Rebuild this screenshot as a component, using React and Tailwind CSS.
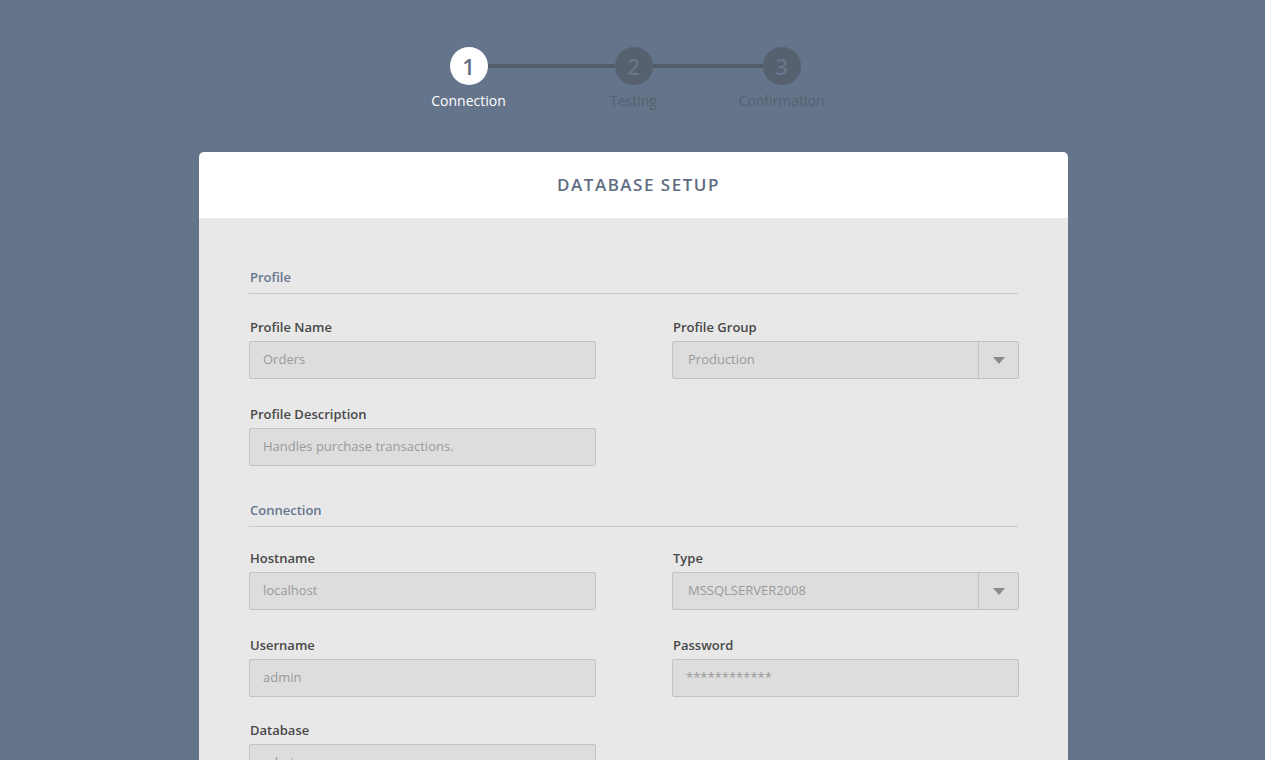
import React from "react";

function Field({ label, value, select, className = "" }) {
  return (
    <div className={"flex flex-col " + className}>
      <label className="text-[13px] font-semibold text-[#484848] leading-[18px] mb-[5px] pl-[1px]">{label}</label>
      <div className="flex h-[38px] items-stretch bg-[#dddddd] border border-[#c2c2c2] rounded-[2px]">
        <div className={"flex-1 flex items-center text-[13px] text-[#9a9a9a] " + (select ? "pl-[15px]" : "pl-[13px]")}>{value}</div>
        {select && (
          <div className="w-[40px] border-l border-[#c2c2c2] flex items-center justify-center">
            <svg width="12" height="7" viewBox="0 0 12 7"><path d="M0 0 H12 L6 7 Z" fill="#8a8a8a" /></svg>
          </div>
        )}
      </div>
    </div>
  );
}

function Section({ title }) {
  return (
    <div className="border-b border-[#c9c9c9] pb-[5px] pl-[1px]">
      <span className="text-[13px] font-semibold text-[#66768f]">{title}</span>
    </div>
  );
}

function Step({ n, label, active }) {
  return (
    <div className="relative">
      <div
        className={
          "w-[38px] h-[38px] rounded-full flex items-center justify-center text-[22px] font-semibold " +
          (active ? "bg-white text-[#5f6d82]" : "bg-[#56606e] text-[#68758a]")
        }
      >
        {n}
      </div>
      <div
        className={
          "absolute top-[43px] left-1/2 -translate-x-1/2 whitespace-nowrap text-[14px] " +
          (active ? "text-white" : "text-[#56606e]")
        }
      >
        {label}
      </div>
    </div>
  );
}

export default function App() {
  return (
    <div className="min-h-[760px] bg-[#64748a] overflow-hidden" style={{ fontFamily: '"Open Sans", "Noto Sans", sans-serif' }}>
      <div className="flex justify-center pt-[47px]">
        <div className="flex items-center ml-[-15px]">
          <Step n="1" label="Connection" active />
          <div className="w-[127px] h-[4px] bg-[#525c6b]" />
          <Step n="2" label="Testing" />
          <div className="w-[110px] h-[4px] bg-[#525c6b]" />
          <Step n="3" label="Confirmation" />
        </div>
      </div>
      <div className="mt-[67px] w-[869px] ml-[199px] rounded-t-[5px] overflow-hidden">
        <div className="bg-white h-[66px] flex items-center justify-center">
          <h1 className="text-[17px] font-semibold tracking-[1.5px] text-[#5f6d82] pl-[10px]">DATABASE SETUP</h1>
        </div>
        <div className="bg-[#e8e8e8] px-[50px] pt-[46px] pb-[60px]">
          <Section title="Profile" />
          <div className="grid grid-cols-2 gap-x-[76px] gap-y-[26px] mt-[24px] w-[770px]">
            <Field label="Profile Name" value="Orders" />
            <Field label="Profile Group" value="Production" select />
            <Field label="Profile Description" value="Handles purchase transactions." />
            <div />
          </div>
          <div className="mt-[31px]">
            <Section title="Connection" />
          </div>
          <div className="grid grid-cols-2 gap-x-[76px] gap-y-[26px] mt-[22px] w-[770px]">
            <Field label="Hostname" value="localhost" />
            <Field label="Type" value="MSSQLSERVER2008" select />
            <Field label="Username" value="admin" />
            <Field label="Password" value="************" />
            <Field label="Database" value="admin" className="-mt-[2px]" />
            <div />
          </div>
        </div>
      </div>
    </div>
  );
}
